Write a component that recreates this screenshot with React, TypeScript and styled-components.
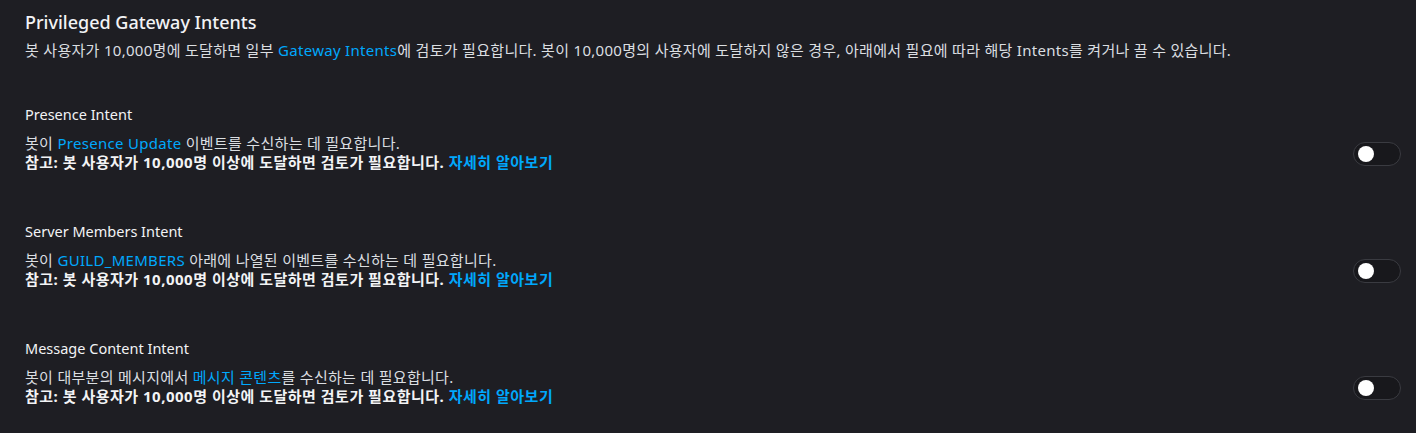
import React from 'react';
import styled, { createGlobalStyle } from 'styled-components';

const GlobalStyle = createGlobalStyle`
  html, body {
    margin: 0;
    padding: 0;
    background: #1e1e23;
  }

  body {
    font-family: 'Noto Sans', 'Noto Sans CJK KR', sans-serif;
    color: #dbdee1;
    -webkit-font-smoothing: antialiased;
  }
`;

const Page = styled.div`
  width: 1416px;
  height: 433px;
  box-sizing: border-box;
  padding: 8px 15px 0 25px;
  background: #1e1e23;
  overflow: hidden;
`;

const Heading = styled.h2`
  margin: 0;
  font-size: 18px;
  font-weight: 500;
  line-height: 28px;
  color: #f2f3f5;
`;

const Lead = styled.p`
  margin: 4px 0 0;
  font-size: 15px;
  line-height: 20px;
  letter-spacing: 0.3px;
  color: #dbdee1;
`;

const Link = styled.a`
  color: #00a8fc;
  text-decoration: none;
  cursor: pointer;
`;

const IntentList = styled.div`
  margin-top: 44px;
  display: flex;
  flex-direction: column;
  gap: 49px;
`;

const IntentRow = styled.div`
  display: flex;
  align-items: flex-end;
  justify-content: space-between;
`;

const IntentText = styled.div`
  display: flex;
  flex-direction: column;
`;

const IntentName = styled.div`
  font-size: 14.5px;
  line-height: 20px;
  color: #f2f3f5;
  margin-bottom: 10px;
`;

const Line = styled.div<{ $bold?: boolean }>`
  font-size: 15px;
  line-height: 19px;
  letter-spacing: ${(p) => (p.$bold ? '0.5px' : '0.3px')};
  font-weight: ${(p) => (p.$bold ? 700 : 400)};
  color: ${(p) => (p.$bold ? '#f2f3f5' : '#dbdee1')};
`;

const Toggle = styled.button<{ $on?: boolean }>`
  width: 48px;
  height: 24px;
  margin-bottom: 6px;
  padding: 0 4px;
  box-sizing: border-box;
  border-radius: 12px;
  border: 1px solid #3a3b41;
  background: ${(p) => (p.$on ? '#5865f2' : '#18181c')};
  display: flex;
  align-items: center;
  justify-content: ${(p) => (p.$on ? 'flex-end' : 'flex-start')};
  cursor: pointer;
`;

const Knob = styled.span`
  width: 16px;
  height: 16px;
  border-radius: 50%;
  background: #ffffff;
`;

const Note = () => (
  <Line $bold>
    참고: 봇 사용자가 10,000명 이상에 도달하면 검토가 필요합니다. <Link>자세히 알아보기</Link>
  </Line>
);

type Intent = {
  name: string;
  body: React.ReactNode;
};

const intents: Intent[] = [
  {
    name: 'Presence Intent',
    body: (
      <>
        봇이 <Link>Presence Update</Link> 이벤트를 수신하는 데 필요합니다.
      </>
    ),
  },
  {
    name: 'Server Members Intent',
    body: (
      <>
        봇이 <Link>GUILD_MEMBERS</Link> 아래에 나열된 이벤트를 수신하는 데 필요합니다.
      </>
    ),
  },
  {
    name: 'Message Content Intent',
    body: (
      <>
        봇이 대부분의 메시지에서 <Link>메시지 콘텐츠</Link>를 수신하는 데 필요합니다.
      </>
    ),
  },
];

export default function App() {
  return (
    <>
      <GlobalStyle />
      <Page>
        <Heading>Privileged Gateway Intents</Heading>
        <Lead>
          봇 사용자가 10,000명에 도달하면 일부 <Link>Gateway Intents</Link>에 검토가 필요합니다. 봇이
          10,000명의 사용자에 도달하지 않은 경우, 아래에서 필요에 따라 해당 Intents를 켜거나 끌 수 있습니다.
        </Lead>
        <IntentList>
          {intents.map((intent) => (
            <IntentRow key={intent.name}>
              <IntentText>
                <IntentName>{intent.name}</IntentName>
                <Line>{intent.body}</Line>
                <Note />
              </IntentText>
              <Toggle aria-label={intent.name}>
                <Knob />
              </Toggle>
            </IntentRow>
          ))}
        </IntentList>
      </Page>
    </>
  );
}
